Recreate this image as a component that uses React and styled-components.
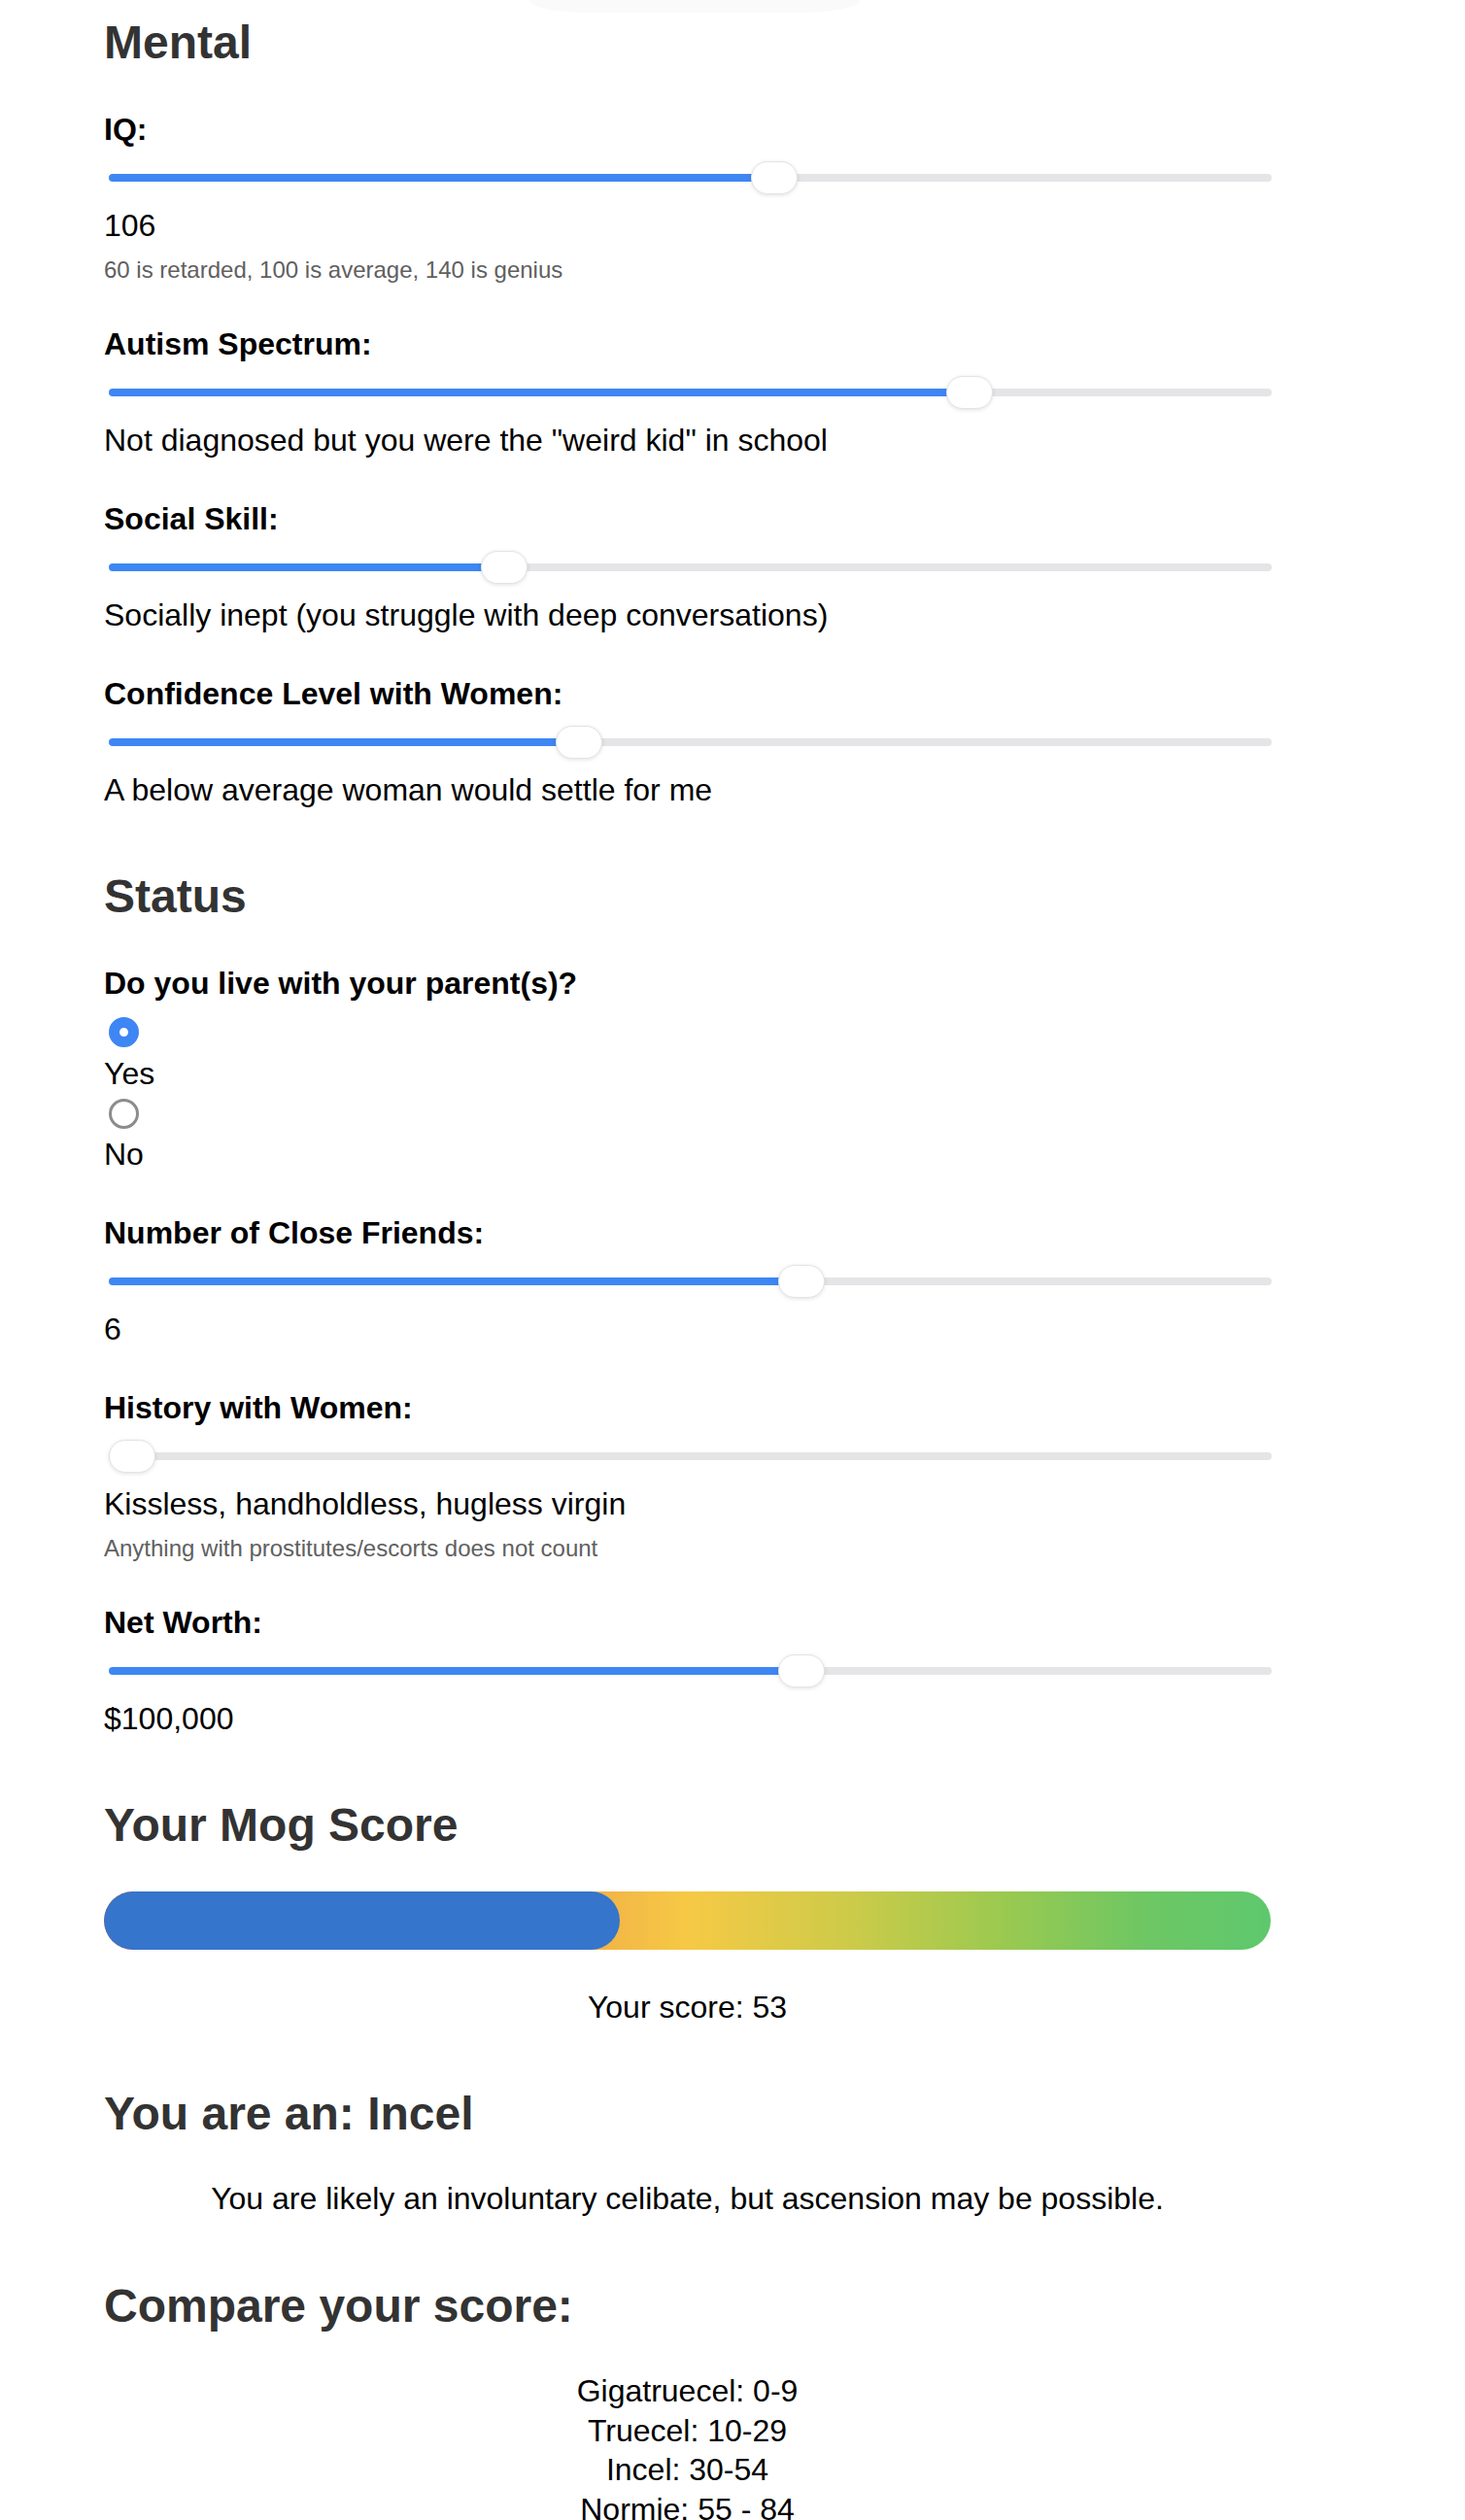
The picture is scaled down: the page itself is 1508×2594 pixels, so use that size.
import React, { useState } from 'react';
import styled, { createGlobalStyle } from 'styled-components';

const GlobalStyle = createGlobalStyle`
  body {
    margin: 0;
    background: #fff;
    font-family: "Liberation Sans", Arial, Helvetica, sans-serif;
    color: #000;
  }
`;

const Page = styled.div`
  display: flex;
  flex-direction: column;
  width: 1201px;
  padding-left: 107px;
`;

const TopShade = styled.div`
  align-self: center;
  width: 340px;
  height: 13px;
  margin-left: 15px;
  background: #fafafa;
  border-radius: 0 0 60px 60px / 0 0 13px 13px;
`;

const SectionTitle = styled.h2`
  margin: ${p => p.$top || 0}px 0 ${p => p.$bottom ?? 44}px;
  font-size: 48px;
  line-height: 55px;
  font-weight: 700;
  color: #333;
`;

const Field = styled.div`
  display: flex;
  flex-direction: column;
  margin-bottom: 44px;
`;

const FieldLabel = styled.label`
  display: block;
  margin-bottom: ${p => p.$gap ?? 14}px;
  font-size: 32px;
  line-height: 37px;
  font-weight: 700;
  color: #000;
`;

const Range = styled.input.attrs({ type: 'range' })`
  -webkit-appearance: none;
  appearance: none;
  width: 1197px;
  height: 34px;
  margin: 0 0 14px 5px;
  padding: 0;
  background: transparent;
  outline: none;

  &::-webkit-slider-runnable-track {
    height: 8px;
    border-radius: 4px;
    background: linear-gradient(
      to right,
      #3e86f4 calc(24px + (100% - 48px) * var(--frac)),
      #e5e5e7 0
    );
  }

  &::-webkit-slider-thumb {
    -webkit-appearance: none;
    appearance: none;
    width: 48px;
    height: 34px;
    margin-top: -13px;
    border-radius: 17px;
    background: #fff;
    border: 1px solid #e4e4e4;
    box-shadow: 0 1px 4px rgba(0, 0, 0, 0.12);
  }
`;

const ValueText = styled.div`
  font-size: 32px;
  line-height: 37px;
  color: #000;
`;

const Hint = styled.div`
  margin-top: 13px;
  font-size: 24px;
  line-height: 28px;
  color: #606060;
`;

const RadioList = styled.div`
  display: flex;
  flex-direction: column;
  gap: 7px;
`;

const RadioChoice = styled.label`
  display: flex;
  flex-direction: column;
  align-items: flex-start;
  gap: 8.5px;
  font-size: 32px;
  line-height: 37px;
  color: #000;
`;

const Radio = styled.input.attrs({ type: 'radio' })`
  -webkit-appearance: none;
  appearance: none;
  box-sizing: border-box;
  width: 31px;
  height: 31px;
  margin: 0 0 0 5px;
  border-radius: 50%;
  border: 3px solid #8c8c8c;
  background: #fff;

  &:checked {
    border: 11px solid #3e86f4;
  }
`;

const ScoreBar = styled.div`
  position: relative;
  height: 60px;
  border-radius: 30px;
  overflow: hidden;
  background: linear-gradient(
    to right,
    #e8553f 0%,
    #f0a847 38%,
    #f6c945 50%,
    #cccb49 64%,
    #9bc950 77%,
    #6ec763 89%,
    #5ec86e 100%
  );
`;

const ScoreFill = styled.div`
  height: 100%;
  border-radius: 30px;
  background: #3575cc;
`;

const CenterText = styled.p`
  margin: ${p => p.$top || 0}px 0 0;
  font-size: 32px;
  line-height: ${p => p.$line || 37}px;
  text-align: center;
  color: #000;
`;

const TierList = styled.div`
  display: flex;
  flex-direction: column;
  align-items: center;
`;

function Slider({ label, min, max, initial, text, hint, showValue }) {
  const [value, setValue] = useState(initial);
  const frac = (value - min) / (max - min);
  return (
    <Field>
      <FieldLabel>{label}</FieldLabel>
      <Range
        min={min}
        max={max}
        value={value}
        onChange={e => setValue(Number(e.target.value))}
        style={{ '--frac': frac }}
      />
      <ValueText>{showValue ? value : text}</ValueText>
      {hint && <Hint>{hint}</Hint>}
    </Field>
  );
}

const tiers = [
  'Gigatruecel: 0-9',
  'Truecel: 10-29',
  'Incel: 30-54',
  'Normie: 55 - 84',
];

export default function App() {
  const [livesHome, setLivesHome] = useState('yes');
  const fill = 44.2;

  return (
    <Page>
      <GlobalStyle />
      <TopShade />

      <SectionTitle $top={3}>Mental</SectionTitle>
      <Slider
        label="IQ:"
        min={60}
        max={140}
        initial={106}
        showValue
        hint="60 is retarded, 100 is average, 140 is genius"
      />
      <Slider
        label="Autism Spectrum:"
        min={0}
        max={4}
        initial={3}
        text={'Not diagnosed but you were the "weird kid" in school'}
      />
      <Slider
        label="Social Skill:"
        min={0}
        max={3}
        initial={1}
        text="Socially inept (you struggle with deep conversations)"
      />
      <Slider
        label="Confidence Level with Women:"
        min={0}
        max={5}
        initial={2}
        text="A below average woman would settle for me"
      />

      <SectionTitle $top={19}>Status</SectionTitle>
      <Field>
        <FieldLabel $gap={16}>Do you live with your parent(s)?</FieldLabel>
        <RadioList>
          <RadioChoice>
            <Radio
              name="parents"
              checked={livesHome === 'yes'}
              onChange={() => setLivesHome('yes')}
            />
            Yes
          </RadioChoice>
          <RadioChoice>
            <Radio
              name="parents"
              checked={livesHome === 'no'}
              onChange={() => setLivesHome('no')}
            />
            No
          </RadioChoice>
        </RadioList>
      </Field>
      <Slider
        label="Number of Close Friends:"
        min={0}
        max={10}
        initial={6}
        showValue
      />
      <Slider
        label="History with Women:"
        min={0}
        max={5}
        initial={0}
        text="Kissless, handholdless, hugless virgin"
        hint="Anything with prostitutes/escorts does not count"
      />
      <Slider
        label="Net Worth:"
        min={0}
        max={5}
        initial={3}
        text="$100,000"
      />

      <SectionTitle $top={19} $bottom={41}>Your Mog Score</SectionTitle>
      <ScoreBar>
        <ScoreFill style={{ width: `${fill}%` }} />
      </ScoreBar>
      <CenterText $top={41}>Your score: 53</CenterText>

      <SectionTitle $top={63} $bottom={42}>You are an: Incel</SectionTitle>
      <CenterText>
        You are likely an involuntary celibate, but ascension may be possible.
      </CenterText>

      <SectionTitle $top={64} $bottom={40}>Compare your score:</SectionTitle>
      <TierList>
        {tiers.map(t => (
          <CenterText key={t} $line={40.5}>{t}</CenterText>
        ))}
      </TierList>
    </Page>
  );
}
